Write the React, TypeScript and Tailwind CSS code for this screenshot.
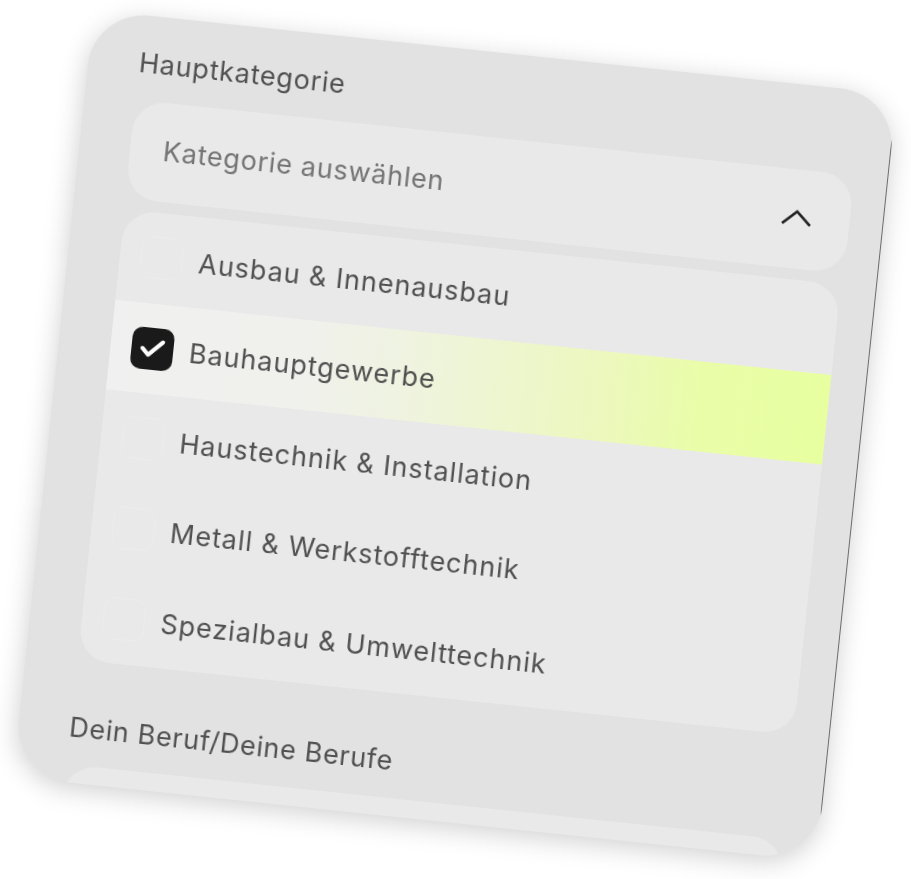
import { Check } from "lucide-react";

const kategorien = [
  { name: "Ausbau & Innenausbau" },
  { name: "Bauhauptgewerbe", checked: true },
  { name: "Haustechnik & Installation" },
  { name: "Metall & Werkstofftechnik" },
  { name: "Spezialbau & Umwelttechnik" },
];

const App = () => {
  return (
    <div className="flex h-screen w-full items-center justify-center overflow-hidden bg-white pb-[8px] pr-[2px] font-['Inter',sans-serif]">
      <div className="relative h-[771px] w-[808px] shrink-0 rotate-6 overflow-hidden rounded-[56px] bg-[#e2e2e2] pl-[51px] pr-[34px] pt-[32px] shadow-[0_6px_26px_rgba(0,0,0,0.18)] blur-[0.7px]">
        <div className="absolute bottom-[39px] right-0 top-[43px] w-[1.5px] bg-[#6b6b6b]" />

        <div className="h-[32px] text-[27px] leading-[32px] tracking-[0.8px] text-[#505050]">Hauptkategorie</div>
        <div className="mt-[21px] flex h-[99px] items-center justify-between rounded-[32px] bg-[#e9e9e9] pl-[33px] pr-[38px]">
          <span className="text-[27px] tracking-[0.8px] text-[#747474]">Kategorie auswählen</span>
          <svg viewBox="0 0 30 16" fill="none" className="mb-[3px] h-[16px] w-[30px] text-[#222222]">
            <path d="M1 15 15 2l14 13" stroke="currentColor" strokeWidth="2.6" />
          </svg>
        </div>

        <div className="ml-[1px] mr-[2px] mt-[11px] h-[453px] overflow-hidden rounded-[32px] bg-[#e9e9e9]">
          {kategorien.map((kategorie) => (
            <div
              key={kategorie.name}
              className={
                kategorie.checked
                  ? "flex h-[90.6px] items-center gap-[16px] bg-[linear-gradient(90deg,#f0f0f0_0%,#f0f1ec_27%,#eff3e0_41%,#ecf8bd_69%,#e9fda9_82%,#e8ffa0_100%)] pl-[21px]"
                  : "flex h-[90.6px] items-center gap-[16px] pl-[21px]"
              }
            >
              {kategorie.checked ? (
                <div className="flex h-[42px] w-[42px] items-center justify-center rounded-[10px] bg-[#1a1a1a]">
                  <Check size={30} strokeWidth={3.2} className="text-white" />
                </div>
              ) : (
                <div className="h-[42px] w-[42px] rounded-[10px] border border-[#ececec]" />
              )}
              <span className="pt-[3px] text-[27px] tracking-[1px] text-[#505050]">{kategorie.name}</span>
            </div>
          ))}
        </div>

        <div className="mt-[52px] h-[32px] text-[27px] leading-[32px] tracking-[0.7px] text-[#505050]">Dein Beruf/Deine Berufe</div>
        <div className="mt-[21px] h-[99px] rounded-[32px] bg-[#e9e9e9]" />
      </div>
    </div>
  );
};

export default App;
